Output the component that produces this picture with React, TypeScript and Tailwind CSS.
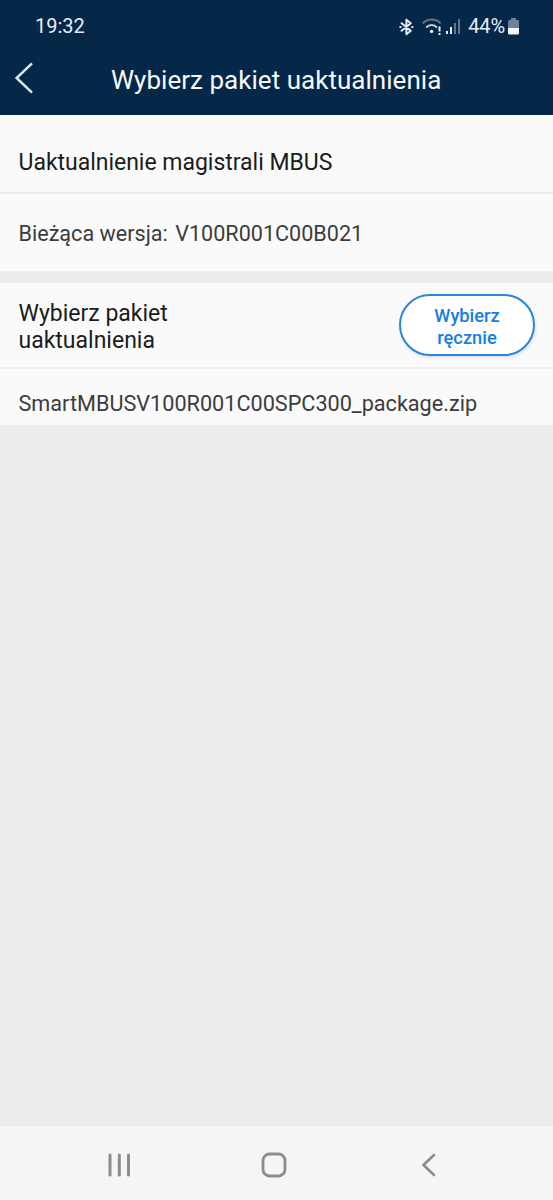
const currentVersion = 'V100R001C00B021';
const packages = ['SmartMBUSV100R001C00SPC300_package.zip'];

function BluetoothIcon() {
  return (
    <svg width="15" height="18" viewBox="0 0 15 18" fill="none" stroke="#e4edf5" strokeWidth="2" strokeLinejoin="round" strokeLinecap="round">
      <path d="M2.6 5.2 11.8 12.7 7.4 16.3V1.7L11.8 5.3 2.6 12.8" />
      <path d="M1.3 9h.3M13.2 9h.3" strokeWidth="2.2" />
    </svg>
  );
}

function WifiIcon() {
  return (
    <svg width="20" height="18" viewBox="0 0 20 18" fill="none">
      <path d="M.7 5.2C6 .3 13.6 .3 18.7 5.2" stroke="#5f768d" strokeWidth="1.9" />
      <path d="M4.2 9.5C7.5 6.2 11.8 6.2 15 9.5" stroke="#c3d0dc" strokeWidth="2" />
      <circle cx="9.600" cy="13.400" r="1.700" fill="#e4edf5" />
      <path d="M17.5 8.500v5M17.500 15v2" stroke="#e4edf5" strokeWidth="2" />
    </svg>
  );
}

function SignalIcon() {
  return (
    <svg width="15" height="17" viewBox="0 0 15 17" fill="#5f768d">
      <rect x="0" y="13" width="2" height="3" fill="#e4edf5" />
      <rect x="4" y="9" width="2" height="7" fill="#e4edf5" />
      <rect x="8" y="5" width="2" height="11" />
      <rect x="12" y="1" width="2" height="15" />
    </svg>
  );
}

function BatteryIcon() {
  return (
    <svg width="11" height="17" viewBox="0 0 11 17">
      <path d="M3 0h5v2h1.5A1.5 1.5 0 0 1 11 3.5V10H0V3.5A1.5 1.5 0 0 1 1.5 2H3Z" fill="#6e8397" />
      <path d="M0 10h11v5a1.5 1.5 0 0 1-1.5 1.5h-8A1.5 1.5 0 0 1 0 15Z" fill="#f2f6fa" />
    </svg>
  );
}

function StatusBar() {
  return (
    <div className="flex h-[53px] items-center justify-between pr-[34px] pl-[35px] text-[20px] text-[#e4edf5]">
      <span className="-mt-px">19:32</span>
      <div className="flex items-center">
        <BluetoothIcon />
        <span className="ml-[8px]"><WifiIcon /></span>
        <span className="ml-[4px]"><SignalIcon /></span>
        <span className="-mt-px ml-[7px] tracking-[-0.1px]">44%</span>
        <span className="ml-[3px]"><BatteryIcon /></span>
      </div>
    </div>
  );
}

function TitleBar() {
  return (
    <div className="flex h-[62px] items-start">
      <button className="mt-[8px] ml-[14px]" aria-label="Wstecz">
        <svg width="20" height="34" viewBox="0 0 20 34" fill="none" stroke="#dce6ef" strokeWidth="2.5">
          <path d="M18 2.4 2.6 17 18 31.6" />
        </svg>
      </button>
      <h1 className="ml-[77px] text-[26px] leading-[54px] tracking-[0.03px] whitespace-nowrap text-[#f5f9fc]">Wybierz pakiet uaktualnienia</h1>
    </div>
  );
}

function NavBar() {
  return (
    <nav className="flex h-[74px] items-center bg-[#f5f5f5] pt-[4px] pl-[107px]">
      <svg width="24" height="24" viewBox="0 0 24 24" stroke="#8c8c8c" strokeWidth="3" strokeLinecap="round">
        <path d="M3 2v20M12.3 2v20M21.5 2v20" />
      </svg>
      <svg className="ml-[130px]" width="26" height="26" viewBox="0 0 26 26" fill="none" stroke="#8c8c8c" strokeWidth="2.8">
        <rect x="2" y="2" width="22" height="22" rx="6.5" />
      </svg>
      <svg className="ml-[134px]" width="16" height="24" viewBox="0 0 16 24" fill="none" stroke="#8c8c8c" strokeWidth="2.6" strokeLinecap="round" strokeLinejoin="round">
        <path d="M13 2 2.5 12 13 22" />
      </svg>
    </nav>
  );
}

export default function App() {
  return (
    <div className="flex h-[1200px] w-[553px] flex-col overflow-hidden bg-[#ebecee] font-['Roboto',sans-serif]">
      <header className="bg-[#052748]">
        <StatusBar />
        <TitleBar />
      </header>

      <main className="flex-1">
        <section className="bg-[#fafafa]">
          <h2 className="h-[79px] border-b-2 border-[#ededee] px-[18.5px] text-[23px] leading-[95px] tracking-[-0.02px] text-[#1c1c1c]">
            Uaktualnienie magistrali MBUS
          </h2>
          <p className="h-[77px] px-[18.5px] text-[21.6px] leading-[80px] text-[#3c3c3c]">
            Bieżąca wersja: <span className="ml-[2px]">{currentVersion}</span>
          </p>
        </section>

        <section className="mt-[12px] bg-[#fafafa]">
          <div className="flex h-[86px] items-center justify-between border-b-2 border-[#ededee] pr-[18px] pl-[18.5px]">
            <h2 className="w-[200px] pt-[3px] text-[23px] leading-[27px] text-[#1c1c1c]">Wybierz pakiet uaktualnienia</h2>
            <button className="h-[62px] w-[136px] rounded-full border-2 border-[#2c84dc] bg-white px-6 pt-[3px] text-[18.3px] leading-[22px] font-medium text-[#157ee6] shadow-[1px_2px_3px_rgba(40,120,200,0.15)]">
              Wybierz ręcznie
            </button>
          </div>
          {packages.map((name) => (
            <p key={name} className="h-[56px] px-[18.5px] text-[21.65px] leading-[69px] text-[#3c3c3c]">{name}</p>
          ))}
        </section>
      </main>

      <NavBar />
    </div>
  );
}
